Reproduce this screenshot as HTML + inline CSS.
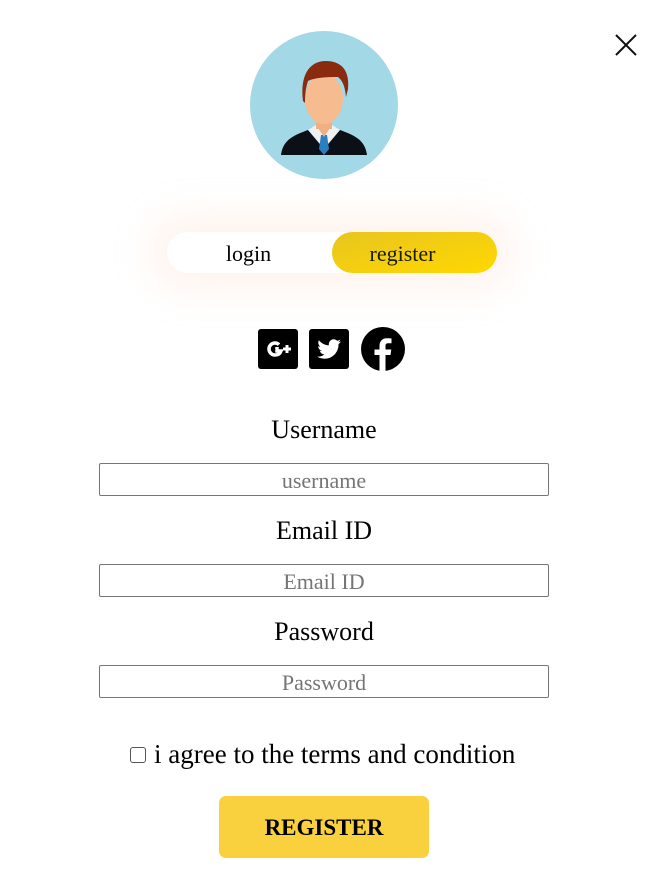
<!DOCTYPE html>
<html><head><meta charset="utf-8"><style>
*{margin:0;padding:0;box-sizing:border-box}
body{width:664px;height:883px;background:#fff;font-family:"Liberation Serif",serif;position:relative;overflow:hidden;color:#000}
.abs{position:absolute}
.lbl{position:absolute;left:0;width:648px;text-align:center;font-size:26px}
.inp{position:absolute;left:99px;width:450px;height:33px;border:1px solid #767676;border-radius:2px;text-align:center;font-size:22px;color:#757575;line-height:33px}
</style></head><body>
<svg class="abs" style="left:614px;top:33px" width="24" height="24" viewBox="0 0 24 24"><path d="M2 2L22 22M22 2L2 22" stroke="#111" stroke-width="2"/></svg>
<svg class="abs" style="left:250px;top:31px" width="148" height="148" viewBox="0 0 148 148">
<circle cx="74" cy="74" r="74" fill="#a3d8e6"/>
<path d="M31 124 C33 108 45 104 58 99 L90 99 C103 104 115 108 117 124 Z" fill="#0b0f16"/>
<path d="M58 99 L74 118 L90 99 L82 94 L66 94 Z" fill="#eef0f2"/>
<path d="M71 104 L77 104 L79 118 L74 124 L69 118 Z" fill="#2b7fc0"/>
<rect x="66" y="82" width="16" height="16" fill="#f1b084"/>
<path d="M66 94 L74 106 L82 94 Z" fill="#f1b084"/>
<ellipse cx="74" cy="68" rx="19" ry="25" fill="#f6bc8f"/>
<path d="M53 70 C50 46 58 30 76 30 C90 30 100 38 98 58 L96 66 C95 56 93 50 88 46 C80 46 66 46 58 50 C56 56 55 62 55 72 Z" fill="#8a2a0e"/>
</svg>
<div class="abs" style="left:167px;top:232px;width:330px;height:41px;border-radius:21px;background:#fff;box-shadow:0 0 35px 18px rgba(255,215,195,0.28)"></div>
<div class="abs" style="left:332px;top:232px;width:165px;height:41px;border-radius:21px;background:linear-gradient(to bottom right,#e8c520,#ffd800)"></div>
<div class="abs" style="left:167px;top:241px;width:163px;text-align:center;font-size:22px">login</div>
<div class="abs" style="left:320px;top:241px;width:165px;text-align:center;font-size:22px;color:#1a1a00">register</div>
<svg class="abs" style="left:258px;top:329px" width="40" height="40" viewBox="0 0 40 40"><rect width="40" height="40" rx="3"/><path d="M19 18 L19 22 L23 22 C22 25 20 26 17 26 C13.7 26 11 23.3 11 20 C11 16.7 13.7 14 17 14 C18.6 14 20 14.6 21 15.6" stroke="#fff" stroke-width="3.5" fill="none"/><path d="M29 16V24M25 20H33" stroke="#fff" stroke-width="3"/></svg>
<svg class="abs" style="left:309px;top:329px" width="40" height="40" viewBox="0 0 40 40"><rect width="40" height="40" rx="3"/><path d="M32 12.5c-.9.4-1.8.6-2.8.8 1-.6 1.8-1.6 2.1-2.7-1 .6-2 1-3.1 1.2a4.9 4.9 0 0 0-8.3 4.5c-4-.2-7.6-2.1-10-5.1a4.9 4.9 0 0 0 1.5 6.5c-.8 0-1.6-.2-2.2-.6 0 2.4 1.7 4.4 3.9 4.8-.7.2-1.5.2-2.2.1.6 2 2.4 3.4 4.6 3.4A9.8 9.8 0 0 1 8 27.5 13.9 13.9 0 0 0 15.5 29.7c9 0 14-7.5 14-14v-.6c1-.7 1.8-1.6 2.5-2.6z" fill="#fff"/></svg>
<svg class="abs" style="left:361px;top:327px" width="44" height="44" viewBox="0 0 44 44"><circle cx="22" cy="22" r="22"/><path d="M24.5 44V28H29.5L30.3 22.5H24.5V19C24.5 17.4 25 16.3 27.3 16.3H30.5V11.5C29.9 11.4 28 11.3 25.9 11.3 21.4 11.3 18.5 14 18.5 18.9V22.5H13.5V28H18.5V44Z" fill="#fff"/></svg>
<div class="lbl" style="top:415px">Username</div>
<div class="inp" style="top:463px">username</div>
<div class="lbl" style="top:516px">Email ID</div>
<div class="inp" style="top:564px">Email ID</div>
<div class="lbl" style="top:617px">Password</div>
<div class="inp" style="top:665px">Password</div>
<div class="abs" style="left:130px;top:747px;width:16px;height:16px;border:1px solid #555;border-radius:3px"></div>
<div class="abs" style="left:154px;top:739px;font-size:27px">i agree to the terms and condition</div>
<div class="abs" style="left:219px;top:796px;width:210px;height:62px;border-radius:7px;background:#f9d13f;text-align:center;line-height:64px;font-size:23px;font-weight:bold">REGISTER</div>
</body></html>
